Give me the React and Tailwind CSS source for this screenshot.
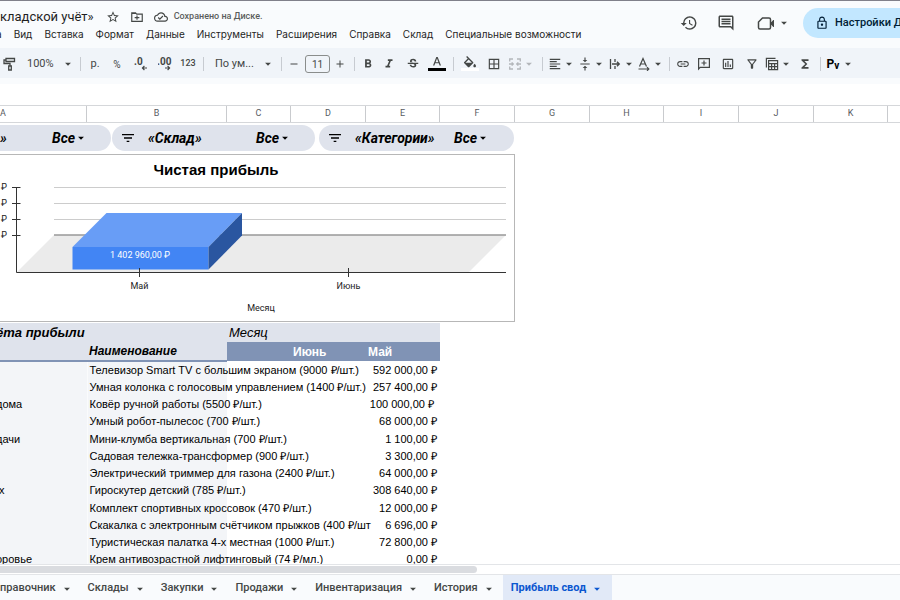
import clsx from "clsx";
import {
  MdStarBorder,
  MdOutlineCloudDone,
  MdHistory,
  MdOutlineInsertComment,
  MdLockOutline,
  MdArrowDropDown,
  MdRemove,
  MdAdd,
  MdFormatBold,
  MdFormatItalic,
  MdStrikethroughS,
  MdFormatColorFill,
  MdBorderAll,
  MdFormatAlignLeft,
  MdVerticalAlignCenter,
  MdLink,
  MdOutlineInsertChart,
  MdOutlineFilterAlt,
  MdFunctions,
  MdFilterList,
} from "react-icons/md";

const menus = [
  "а",
  "Вид",
  "Вставка",
  "Формат",
  "Данные",
  "Инструменты",
  "Расширения",
  "Справка",
  "Склад",
  "Специальные возможности",
];

const columns = [
  { name: "A", width: "w-[87px] justify-start" },
  { name: "B", width: "w-[140px] justify-center" },
  { name: "C", width: "w-16 justify-center" },
  { name: "D", width: "w-[75px] justify-center" },
  { name: "E", width: "w-[74px] justify-center" },
  { name: "F", width: "w-[75px] justify-center" },
  { name: "G", width: "w-[75px] justify-center" },
  { name: "H", width: "w-[74px] justify-center" },
  { name: "I", width: "w-[75px] justify-center" },
  { name: "J", width: "w-[75px] justify-center" },
  { name: "K", width: "w-[74px] justify-center" },
];

const rows = [
  { group: "", name: "Телевизор Smart TV с большим экраном (9000 ₽/шт.)", value: "592 000,00 ₽" },
  { group: "", name: "Умная колонка с голосовым управлением (1400 ₽/шт.)", value: "257 400,00 ₽" },
  { group: "дома", name: "Ковёр ручной работы (5500 ₽/шт.)", value: "100 000,00 ₽\u00a0" },
  { group: "", name: "Умный робот-пылесос (700 ₽/шт.)", value: "68 000,00 ₽" },
  { group: "дачи", name: "Мини-клумба вертикальная (700 ₽/шт.)", value: "1 100,00 ₽" },
  { group: "", name: "Садовая тележка-трансформер (900 ₽/шт.)", value: "3 300,00 ₽" },
  { group: "", name: "Электрический триммер для газона (2400 ₽/шт.)", value: "64 000,00 ₽" },
  { group: "\u00a0х", name: "Гироскутер детский (785 ₽/шт.)", value: "308 640,00 ₽" },
  { group: "", name: "Комплект спортивных кроссовок (470 ₽/шт.)", value: "12 000,00 ₽" },
  { group: "", name: "Скакалка с электронным счётчиком прыжков (400 ₽/шт", value: "6 696,00 ₽" },
  { group: "", name: "Туристическая палатка 4-х местная (1000 ₽/шт.)", value: "72 800,00 ₽" },
  { group: "оровье", name: "Крем антивозрастной лифтинговый (74 ₽/мл.)", value: "0,00 ₽" },
];

const sheets = ["правочник", "Склады", "Закупки", "Продажи", "Инвентаризация", "История", "Прибыль свод"];

function Caret({ className }) {
  return <MdArrowDropDown className={clsx("size-3.5 shrink-0", className)} />;
}

function Divider() {
  return <div className="mx-1 h-3.5 w-px shrink-0 bg-[#c7cbd1]" />;
}

function Tool({ label, className = "w-6", children }) {
  return (
    <button
      type="button"
      aria-label={label}
      className={clsx("flex h-6 shrink-0 items-center justify-center", className)}
    >
      {children}
    </button>
  );
}

function Header() {
  return (
    <header className="flex h-[47px] shrink-0 justify-between text-[#444746]">
      <div className="min-w-0 pt-1.5">
        <div className="flex h-5 items-center whitespace-nowrap">
          <h1 className="text-[13px] text-[#1f1f1f]">кладской учёт»</h1>
          <button type="button" aria-label="Добавить в избранное" className="ml-3">
            <MdStarBorder className="size-3.5" />
          </button>
          <button type="button" aria-label="Переместить" className="ml-2.5">
            <svg viewBox="0 0 24 24" className="size-3.5" fill="none" stroke="currentColor" strokeWidth="2">
              <path d="M3 19.500V5h6.500l2 2H21v12.500zM3 6h7" />
              <path d="M8 13h8M12 9.500v7" />
            </svg>
          </button>
          <MdOutlineCloudDone className="ml-2.5 size-3.5" />
          <span className="ml-1.5 text-[9px] font-medium text-[#5a5d5c]">Сохранено на Диске.</span>
        </div>
        <nav className="-ml-1 flex h-3.5 items-center gap-3 font-[Inter,sans-serif] text-[10px] whitespace-nowrap text-[#1f1f1f]">
          {menus.map((menu) => (
            <button key={menu} type="button">
              {menu}
            </button>
          ))}
        </nav>
      </div>
      <div className="flex shrink-0 items-start pt-[7px]">
        <div className="flex h-[30px] items-center">
          <button type="button" aria-label="История изменений">
            <MdHistory className="size-[18px]" />
          </button>
          <button type="button" aria-label="Комментарии" className="ml-[19px]">
            <MdOutlineInsertComment className="size-[18px]" />
          </button>
          <button type="button" aria-label="Видеовстреча" className="ml-[22px] flex items-center">
            <svg viewBox="0 0 18 18" className="size-[18px]" fill="none" stroke="currentColor" strokeWidth="1.5">
              <path d="M5.500 4H12a1.500 1.500 0 0 1 1.500 1.500v8A1.500 1.500 0 0 1 12 15H3a1.500 1.500 0 0 1-1.500-1.500V8z" />
              <path d="M14 9l2.500-2.800v6.600L14 10z" fill="currentColor" strokeWidth="1" />
            </svg>
            <Caret className="ml-0.5" />
          </button>
        </div>
        <button
          type="button"
          className="ml-3 flex h-[30px] w-[97px] items-center gap-1.5 overflow-hidden rounded-l-full bg-[#c2e7ff] pl-3 text-[11px] font-medium whitespace-nowrap text-[#001d35]"
        >
          <MdLockOutline className="size-3.5 shrink-0" />
          Настройки Доступа
        </button>
      </div>
    </header>
  );
}

function Toolbar() {
  return (
    <div className="flex h-[30px] shrink-0 items-center overflow-hidden bg-[#f0f4f9] pt-0.5 text-[11px] text-[#444746]">
      <Tool label="Копировать форматирование" className="w-5">
        <svg viewBox="0 0 14 14" className="size-3.5" fill="none" stroke="currentColor" strokeWidth="1.3">
          <path d="M3 1.500h8.500v3H3zM3 3H1v3.500h6V9M5.700 9h2.600v4H5.700z" />
        </svg>
      </Tool>
      <label className="flex w-14 shrink-0 items-center pl-[7px]">
        <select aria-label="Масштаб" className="w-[34px] appearance-none">
          <option>100%</option>
        </select>
        <Caret />
      </label>
      <Divider />
      <Tool label="Денежный формат" className="w-5">р.</Tool>
      <Tool label="Процентный формат"><span className="text-[10px]">%</span></Tool>
      <Tool label="Уменьшить число знаков">
        <svg viewBox="0 0 14 14" className="size-3.5" fill="currentColor">
          <text x="0" y="8" fontSize="10" fontWeight="700">.0</text>
          <path d="M13 10.400H9.800l1-1-.8-.8L7.600 11l2.400 2.400.8-.8-1-1H13z" />
        </svg>
      </Tool>
      <Tool label="Увеличить число знаков">
        <svg viewBox="0 0 14 14" className="size-3.5" fill="currentColor">
          <text x="-1" y="8" fontSize="10" fontWeight="700">.00</text>
          <path d="M7 10.400h3.200l-1-1 .8-.8 2.400 2.400-2.400 2.400-.8-.8 1-1H7z" />
        </svg>
      </Tool>
      <Tool label="Другие форматы" className="w-[22px]"><span className="text-[9px] font-medium">123</span></Tool>
      <Divider />
      <label className="flex w-[69px] shrink-0 items-center pl-[7px]">
        <select aria-label="Шрифт" className="w-[46px] appearance-none">
          <option>По ум...</option>
        </select>
        <Caret />
      </label>
      <Divider />
      <Tool label="Уменьшить размер шрифта" className="w-[15px]"><MdRemove className="size-3" /></Tool>
      <input
        aria-label="Размер шрифта"
        defaultValue="11"
        className="ml-1 h-[18px] w-[25px] shrink-0 rounded-[3px] border border-[#8a8d8c] text-center text-[10px]"
      />
      <Tool label="Увеличить размер шрифта" className="w-5"><MdAdd className="size-3" /></Tool>
      <Divider />
      <Tool label="Полужирный" className="w-[18px]"><MdFormatBold className="size-3.5" /></Tool>
      <Tool label="Курсив"><MdFormatItalic className="size-3.5" /></Tool>
      <Tool label="Зачёркнутый"><MdStrikethroughS className="size-3.5" /></Tool>
      <Tool label="Цвет текста">
        <svg viewBox="0 0 18 14" className="h-3.5 w-[18px]">
          <path d="M8.300 0h1.400L13 8.500h-1.400l-.8-2.200H7.200l-.8 2.200H5zM7.600 5.200h2.800L9 1.400z" fill="#444746" />
          <path d="M0 11h18v3H0z" fill="#000" />
        </svg>
      </Tool>
      <Divider />
      <Tool label="Цвет заливки">
        <span className="flex flex-col items-center pb-0.5">
          <MdFormatColorFill className="h-3 w-4" viewBox="1 0 22 18" />
          <span className="h-[3px] w-[18px] bg-white" />
        </span>
      </Tool>
      <Tool label="Границы"><MdBorderAll className="size-3.5" /></Tool>
      <Tool label="Объединить ячейки" className="w-8 text-[#b3b6ba]">
        <svg viewBox="0 0 14 14" className="size-3.5" fill="none" stroke="currentColor" strokeWidth="1.3">
          <path d="M5 2H1.700v2.500M9 2h3.300v2.500M5 12H1.700V9.500M9 12h3.300V9.500M1 7h4M9 7h4M3.700 5.400L5.300 7 3.700 8.600M10.300 5.400L8.700 7l1.600 1.600" />
        </svg>
        <Caret />
      </Tool>
      <Divider />
      <Tool label="Выравнивание по горизонтали" className="w-[30px]">
        <MdFormatAlignLeft className="size-3.5" /><Caret />
      </Tool>
      <Tool label="Выравнивание по вертикали" className="w-[30px]">
        <MdVerticalAlignCenter className="size-3.5" /><Caret />
      </Tool>
      <Tool label="Перенос текста" className="w-[30px]">
        <svg viewBox="0 0 14 14" className="size-3.5" fill="none" stroke="currentColor" strokeWidth="1.3">
          <path d="M2.500 2v10M7 2v3M7 9v3M4 7h7M9 4.700L11.300 7 9 9.300" />
        </svg>
        <Caret />
      </Tool>
      <Tool label="Поворот текста" className="w-7">
        <svg viewBox="0 0 14 14" className="size-3.5" fill="none" stroke="currentColor" strokeWidth="1.2">
          <path d="M2.500 9.500L6 1.500l3.500 8M3.700 7h4.600M1.500 12h10M10 10.200l1.800 1.800-1.800 1.800" />
        </svg>
        <Caret />
      </Tool>
      <Divider />
      <Tool label="Вставить ссылку" className="w-[18px]"><MdLink className="size-3.5" /></Tool>
      <Tool label="Вставить комментарий">
        <svg viewBox="0 0 14 14" className="size-3.5" fill="none" stroke="currentColor" strokeWidth="1.200">
          <path d="M1.600 12V1.600h10.800v8.800H3.200zM7 3.500v5M4.500 6h5" />
        </svg>
      </Tool>
      <Tool label="Вставить диаграмму"><MdOutlineInsertChart className="size-3.5" /></Tool>
      <Tool label="Создать фильтр"><MdOutlineFilterAlt className="size-3.5" /></Tool>
      <Tool label="Таблица" className="w-[30px]">
        <svg viewBox="0 0 14 14" className="size-3.5" fill="none" stroke="currentColor" strokeWidth="1.200">
          <path d="M3.600 3.600h9v9h-9zM3.600 6.600h9M3.600 9.600h9M6.600 6.600v6M9.600 6.600v6M1.400 10.500V1.400h9.100" />
        </svg>
        <Caret />
      </Tool>
      <Tool label="Функции" className="w-[22px]"><MdFunctions className="size-3.5" /></Tool>
      <Divider />
      <Tool label="Дополнение" className="w-8">
        <span className="text-xs font-bold text-black">P</span>
        <span className="pt-0.5 text-[10px] font-bold text-black">v</span>
        <Caret className="ml-0.5" />
      </Tool>
    </div>
  );
}

function Slicer({ title, className, titleClassName, icon = true }) {
  return (
    <button
      type="button"
      className={clsx(
        "flex h-[26px] shrink-0 items-center bg-[#dfe3ec] text-left text-sm font-bold whitespace-nowrap text-black italic",
        className
      )}
    >
      {icon && <MdFilterList className="mr-3 size-4 shrink-0" />}
      <span className={clsx("shrink-0", titleClassName)}>{title}</span>
      <span className="shrink-0">Все</span>
      <Caret className="-ml-px" />
    </button>
  );
}

function ProfitChart() {
  return (
    <figure className="w-[515px] border border-l-0 border-[#b7b7b7] bg-white">
      <svg viewBox="0 155 514 166" className="block h-[166px] w-[514px]" fontSize="9" fill="#222">
        <text
          x="216"
          y="175"
          textAnchor="middle"
          fontSize="15"
          fontWeight="700"
          fontFamily="Liberation Sans, sans-serif"
          fill="#000"
        >
          Чистая прибыль
        </text>
        <path d="M54 187.500H506M54 203.500H506M54 219.500H506" stroke="#ccc" />
        <path d="M17 272L54 235H506L469 272z" fill="#ebebeb" />
        <path d="M54 235H506" stroke="#999" strokeWidth="1.500" />
        <path d="M72.500 247L106.500 213H242L208.500 247z" fill="#689df6" />
        <path d="M72.500 247H208.500V269.500H72.500z" fill="#4285f4" />
        <path d="M208.500 247L242 213V235.500L208.500 269.500z" fill="#2a56a0" />
        <path
          d="M16.500 187V272.500H506M12 187.500H20.500M12 203.500H20.500M12 219.500H20.500M12 235.500H20.500M139.500 268V277M348.500 268V277"
          stroke="#333"
          fill="none"
        />
        {[190, 206, 222, 238].map((y) => (
          <text key={y} x="7" y={y} textAnchor="end">
            ₽
          </text>
        ))}
        <text x="140" y="258" textAnchor="middle" fill="#fff">
          1 402 960,00 ₽
        </text>
        <text x="139.500" y="289" textAnchor="middle">Май</text>
        <text x="348.500" y="289" textAnchor="middle">Июнь</text>
        <text x="261" y="311" textAnchor="middle">Месяц</text>
      </svg>
    </figure>
  );
}

function ProfitTable() {
  return (
    <table className="-ml-1 w-[444px] table-fixed border-collapse font-['Liberation_Sans',sans-serif] text-[11px] leading-4 whitespace-nowrap text-black">
      <colgroup>
        <col className="w-[91px]" />
        <col className="w-[140px]" />
        <col className="w-16" />
        <col className="w-[75px]" />
        <col className="w-[74px]" />
      </colgroup>
      <thead className="text-left text-[13px]">
        <tr className="h-[19px] bg-[#dfe3ec] italic">
          <th className="p-0">ёта прибыли</th>
          <th className="p-0" />
          <th colSpan={3} className="p-0 pl-0.5 font-normal">Месяц</th>
        </tr>
        <tr className="h-[19px] bg-[#8093b5] text-xs text-white">
          <th className="border-b-2 border-[#8093b5] bg-[#dfe3ec] p-0" />
          <th className="border-b-2 border-[#8093b5] bg-[#dfe3ec] p-0 pl-0.5 text-black italic">Наименование</th>
          <th className="p-0" />
          <th className="p-0 pl-0.5">Июнь</th>
          <th className="p-0 pl-0.5">Май</th>
        </tr>
      </thead>
      <tbody>
        {rows.map((row) => (
          <tr key={row.name} className="h-[17px] nth-[4n]:h-[18px]">
            <td className="border-r border-[#fafbfc] bg-[#f3f5f8] p-0">{row.group}</td>
            <td className="bg-[#f3f5f8] p-0 pl-0.5">{row.name}</td>
            <td className="p-0" />
            <td className="p-0" />
            <td className="p-0 pr-[3px] text-right">{row.value}</td>
          </tr>
        ))}
      </tbody>
    </table>
  );
}

export default function App() {
  return (
    <div className="flex h-screen flex-col overflow-hidden border-t border-[#80808a] bg-[#f9fbfd] font-[Roboto,sans-serif]">
      <Header />
      <Toolbar />
      <div className="mt-1.5 h-[21px] shrink-0 bg-white" />
      <div className="flex h-[18px] shrink-0 border-y border-[#d5d7da] bg-white text-[9px] text-[#575b5f]">
        {columns.map((column) => (
          <div
            key={column.name}
            className={clsx("flex shrink-0 items-center border-r border-[#c9cbce]", column.width)}
          >
            {column.name}
          </div>
        ))}
      </div>
      <main className="min-h-0 flex-1 overflow-hidden bg-white pt-0.5">
        <div className="flex pb-[3px]">
          <Slicer title="»" icon={false} className="w-[111px] rounded-r-full" titleClassName="w-[52px]" />
          <Slicer title="«Склад»" className="ml-px w-[203px] rounded-full pl-2" titleClassName="w-[108px]" />
          <Slicer title="«Категории»" className="ml-1 w-[195px] rounded-full pl-2" titleClassName="w-[99px]" />
        </div>
        <ProfitChart />
        <div className="pt-px">
          <ProfitTable />
        </div>
      </main>
      <div className="h-[11px] shrink-0 border-y border-[#e3e5e8] bg-white pt-px">
        <div className="h-[7px] w-[53%] rounded-r-full bg-[#dadce0]" />
      </div>
      <nav className="flex h-[25px] shrink-0 text-[11px] font-medium text-[#444746]">
        {sheets.map((sheet, i) => (
          <button
            key={sheet}
            type="button"
            className={clsx(
              "flex shrink-0 items-center gap-1 pt-0.5",
              i === 0 && "pr-[7px]",
              i > 0 && i < sheets.length - 1 && "px-[7px]",
              i === sheets.length - 1 && "bg-[#e1e9f7] px-2 font-bold text-[#0b57d0]"
            )}
          >
            {sheet}
            <Caret />
          </button>
        ))}
      </nav>
    </div>
  );
}
